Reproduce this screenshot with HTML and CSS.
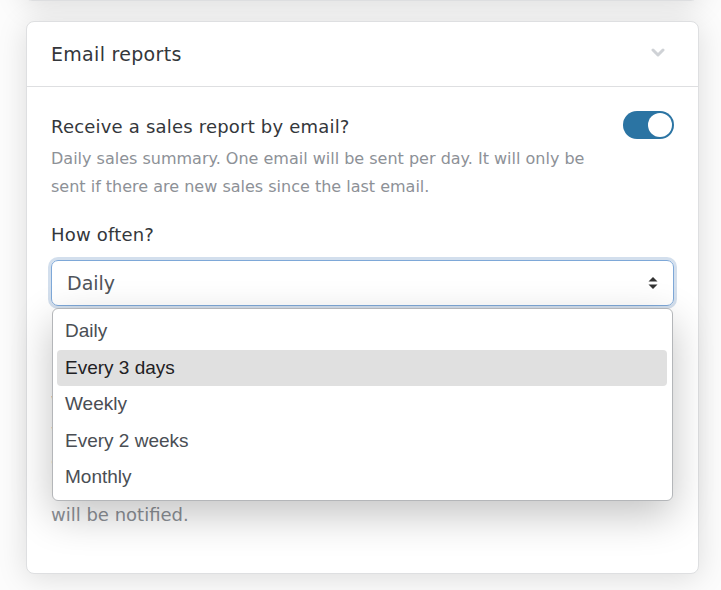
FILE: index.html
```html
<!DOCTYPE html>
<html lang="en">
<head>
    <meta charset="UTF-8">
    <meta name="viewport" content="width=device-width, initial-scale=1.0">
    <title>Settings</title>
    <link rel="stylesheet" href="styles.css">
</head>
<body>
    <!-- Previous panel, scrolled mostly out of view -->
    <div class="card card-prev"></div>

    <div class="card">
        <div class="card-header">
            <h2>Email reports</h2>
            <svg class="chevron" width="14" height="10" viewBox="0 0 14 10">
                <path d="M2 2 L7 7 L12 2" fill="none" stroke="#cfd2d6" stroke-width="3" stroke-linecap="round" stroke-linejoin="round"/>
            </svg>
        </div>

        <div class="card-body">
            <div class="setting-row">
                <div class="setting-text">
                    <div class="setting-label">Receive a sales report by email?</div>
                    <p class="setting-desc">Daily sales summary. One email will be sent per day. It will only be sent if there are new sales since the last email.</p>
                </div>
                <span class="toggle on"><span class="knob"></span></span>
            </div>

            <div class="field">
                <div class="setting-label">How often?</div>
                <div class="select-wrap">
                    <div class="select">
                        <span>Daily</span>
                        <svg class="arrows" width="10" height="14" viewBox="0 0 10 14">
                            <path d="M5 1 L9.5 5.5 L0.5 5.5 Z" fill="#333"/>
                            <path d="M5 13 L9.5 8.5 L0.5 8.5 Z" fill="#333"/>
                        </svg>
                    </div>

                    <!-- Open dropdown -->
                    <ul class="dropdown">
                        <li>Daily</li>
                        <li class="hover">Every 3 days</li>
                        <li>Weekly</li>
                        <li>Every 2 weeks</li>
                        <li>Monthly</li>
                    </ul>
                </div>
            </div>

            <!-- Mostly covered by the open dropdown -->
            <div class="field notify">
                <div class="setting-label">Notify staff members?</div>
                <p class="setting-desc big">When a report is sent, staff members<br>who have access to the sales page<br>and have opted in to reports<br>by email in their own profile<br>will be notified.</p>
            </div>
        </div>
    </div>
</body>
</html>
```

FILE: styles.css
```css
/* Basic reset */
* {
    margin: 0;
    padding: 0;
    box-sizing: border-box;
}

body {
    background-color: #fcfcfc;
    font-family: 'DejaVu Sans', 'Open Sans', sans-serif;
    color: #34373b;
    padding: 0 22px 0 26px;
}

/* Panels */
.card {
    background: #fff;
    border: 1px solid #dedfe1;
    border-radius: 8px;
    box-shadow: 0 4px 30px rgba(0, 0, 0, 0.13);
    margin-bottom: 20px;
}

.card-prev {
    height: 40px;
    margin-top: -39px;
    margin-left: -2px;
}

.card-header {
    height: 65px;
    display: flex;
    align-items: center;
    justify-content: space-between;
    padding: 0 33px 0 24px;
    border-bottom: 1px solid #dedfe1;
}

.card-header h2 {
    font-size: 19px;
    font-weight: 400;
    letter-spacing: 0.3px;
    color: #34373b;
}

.chevron {
    margin-top: -2px;
}

.card-body {
    padding: 26px 24px 44px 24px;
}

/* Toggle row */
.setting-row {
    display: flex;
    justify-content: space-between;
    align-items: flex-start;
    gap: 24px;
}

.setting-text {
    max-width: 560px;
}

.setting-label {
    font-size: 18px;
    letter-spacing: 0.2px;
    line-height: 28px;
    color: #34373b;
}

.setting-desc {
    font-size: 16px;
    line-height: 28px;
    color: #8d9197;
    margin-top: 4px;
}

.setting-desc.big {
    font-size: 18px;
}

.toggle {
    flex: none;
    width: 51px;
    height: 28px;
    border-radius: 14px;
    background: #2b74a3;
    margin-top: -2px;
    display: flex;
    align-items: center;
    justify-content: flex-end;
    padding: 2px;
}

.toggle .knob {
    width: 24px;
    height: 24px;
    border-radius: 50%;
    background: #fff;
}

/* Select field */
.field {
    margin-top: 20px;
}

.field.notify {
    margin-top: 51px;
}

.select-wrap {
    position: relative;
    margin-top: 11px;
}

.select {
    height: 46px;
    border: 1px solid #7ea8d8;
    border-radius: 7px;
    box-shadow: 0 0 0 3px rgba(128, 164, 204, 0.35);
    display: flex;
    align-items: center;
    justify-content: space-between;
    padding: 0 15px 0 15px;
    font-size: 19px;
    color: #50545a;
}

.dropdown {
    position: absolute;
    top: 48px;
    left: 1px;
    right: 1px;
    list-style: none;
    background: #fff;
    border: 1px solid #b4b6b9;
    border-radius: 6px;
    padding: 4px 5px 4px 4px;
    box-shadow: 0 14px 40px rgba(0, 0, 0, 0.24);
    font-family: 'Liberation Sans', Arial, sans-serif;
    font-size: 19px;
    color: #4a4e54;
    z-index: 10;
}

.dropdown li {
    height: 36.6px;
    line-height: 36.6px;
    padding-left: 8px;
    border-radius: 4px;
}

.dropdown li.hover {
    background: #e0e0e0;
    color: #1f2124;
}
```
